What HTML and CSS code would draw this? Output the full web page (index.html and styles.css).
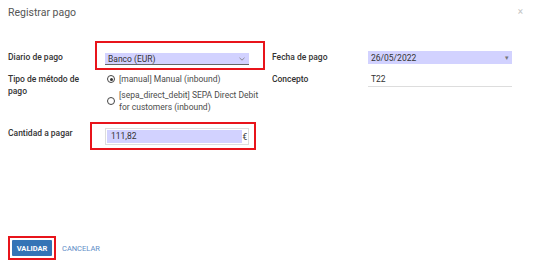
FILE: index.html
```html
<!DOCTYPE html>
<html lang="es">
<head>
    <meta charset="UTF-8">
    <meta name="viewport" content="width=device-width, initial-scale=1.0">
    <title>Registrar pago</title>
    <link rel="stylesheet" href="styles.css">
</head>
<body>
    <div class="dialog">
        <div class="header">
            <h4 class="title">Registrar pago</h4>
            <span class="close">×</span>
        </div>

        <div class="form">
            <label class="label">Diario de pago</label>
            <div class="field">
                <div class="select required mark mark-journal">
                    <span>Banco (EUR)</span>
                    <svg class="chevron" width="6" height="4" viewBox="0 0 6 4"><path d="M0.5 0.8 L3 3.2 L5.5 0.8" fill="none" stroke="#777" stroke-width="0.8"/></svg>
                </div>
            </div>
            <label class="label">Fecha de pago</label>
            <div class="field">
                <div class="date required">
                    <span>26/05/2022</span>
                    <span class="caret">▾</span>
                </div>
            </div>

            <label class="label">Tipo de método de pago</label>
            <div class="field radios">
                <div class="radio checked"><span class="dot"></span><span>[manual] Manual (inbound)</span></div>
                <div class="radio"><span class="dot"></span><span>[sepa_direct_debit] SEPA Direct Debit for customers (inbound)</span></div>
            </div>
            <label class="label">Concepto</label>
            <div class="field">
                <div class="text-input">T22</div>
            </div>

            <label class="label">Cantidad a pagar</label>
            <div class="field">
                <div class="monetary mark mark-amount">
                    <div class="amount required">111,82</div>
                    <span class="currency">€</span>
                </div>
            </div>
        </div>

        <div class="footer">
            <button class="btn-primary mark mark-button">Validar</button>
            <a class="btn-link">Cancelar</a>
        </div>
    </div>
</body>
</html>
```

FILE: styles.css
```css
body {
    margin: 0;
    background: #fff;
    font-family: Roboto, "Liberation Sans", sans-serif;
    color: #4c4c4c;
}
.dialog {
    width: 537px;
    height: 270px;
    display: flex;
    flex-direction: column;
}
.header {
    display: flex;
    justify-content: space-between;
    padding: 6px 14px 0 8px;
}
.title {
    margin: 0;
    font-size: 10.5px;
    font-weight: 400;
    line-height: 14px;
    color: #555;
}
.close {
    font-size: 10px;
    line-height: 12px;
    color: #c4c4c4;
}
.form {
    display: grid;
    grid-template-columns: 97px 167px 96px 145px;
    grid-template-rows: 18px 50px 22px;
    row-gap: 4px;
    margin-top: 29px;
    padding: 0 8px;
    font-size: 8.5px;
    line-height: 12px;
}
.label {
    font-weight: 500;
    color: #333;
    padding-top: 2px;
    padding-right: 10px;
}
.field {
    width: 144px;
}
.field.radios {
    width: 156px;
}
.required {
    background: #d2d2ff;
}
.mark {
    position: relative;
}
.mark::after {
    content: '';
    position: absolute;
    border: 2px solid #e8141b;
    pointer-events: none;
}
.mark-journal::after {
    top: -12px;
    right: -16px;
    bottom: -6px;
    left: -10px;
}
.mark-amount::after {
    top: -7px;
    right: -8px;
    bottom: -6px;
    left: -16px;
}
.mark-button::after {
    top: -4px;
    right: -4px;
    bottom: -4px;
    left: -4px;
}
.select {
    display: flex;
    justify-content: space-between;
    align-items: center;
    height: 11px;
    margin-top: 4px;
    padding: 0 3px;
    border-bottom: 1px solid #666;
    color: #333;
}
.chevron {
    margin-right: 1px;
}
.date {
    display: flex;
    justify-content: space-between;
    align-items: center;
    height: 13px;
    margin-top: 2px;
    padding: 0 3px;
    color: #333;
}
.caret {
    font-size: 7px;
    color: #777;
}
.radio {
    display: flex;
    align-items: flex-start;
    gap: 4px;
    padding-left: 2px;
    margin-top: 2px;
    margin-bottom: 4px;
}
.radio .dot {
    flex: none;
    width: 6px;
    height: 6px;
    margin-top: 2px;
    border: 1px solid #444;
    border-radius: 50%;
    position: relative;
}
.radio:not(.checked) .dot {
    margin-top: 8px;
}
.radio.checked .dot::after {
    content: '';
    position: absolute;
    top: 1.5px;
    left: 1.5px;
    width: 3px;
    height: 3px;
    border-radius: 50%;
    background: #333;
}
.text-input {
    margin-top: 2px;
    padding: 0 3px 1px;
    border-bottom: 1.5px solid #ddd;
    color: #333;
}
.monetary {
    display: flex;
    align-items: center;
    height: 13px;
    margin-top: 3px;
    padding: 1px 0 1px 1px;
    border: 1px solid #ddd;
}
.amount {
    flex: 1;
    height: 13px;
    padding: 0 4px;
    line-height: 13px;
    color: #333;
}
.currency {
    width: 6px;
    text-align: center;
    color: #333;
}
.footer {
    margin-top: auto;
    display: flex;
    align-items: center;
    gap: 10px;
    padding: 0 0 14px 12px;
}
.btn-primary {
    height: 16px;
    width: 40px;
    padding: 0;
    border: none;
    border-radius: 1px;
    background: #3474b6;
    color: #fff;
    font-family: inherit;
    font-size: 7.5px;
    font-weight: 700;
    text-transform: uppercase;
}
.btn-link {
    color: #5d8dc7;
    font-size: 7.5px;
    text-transform: uppercase;
    cursor: pointer;
}
```
